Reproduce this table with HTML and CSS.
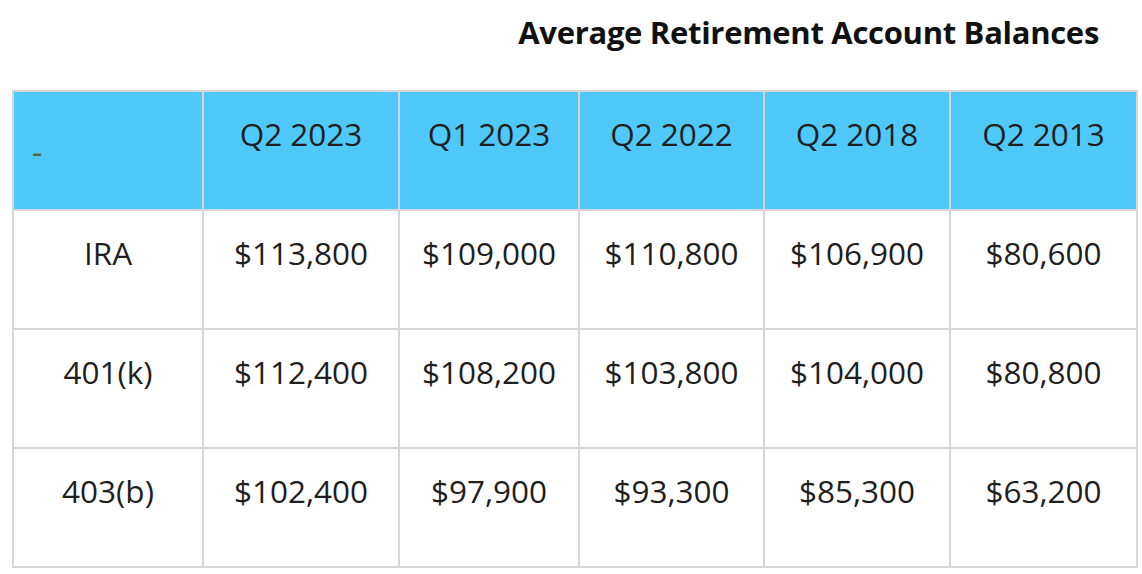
FILE: index.html
```html
<!DOCTYPE html>
<html>
<head>
<meta charset="utf-8">
<link rel="stylesheet" href="styles.css">
</head>
<body>
<div class="page">
  <h2 class="title">Average Retirement Account Balances</h2>
  <table class="balances">
    <colgroup>
      <col class="c0"><col class="c1"><col class="c2"><col class="c3"><col class="c4"><col class="c5">
    </colgroup>
    <thead>
      <tr>
        <th class="corner"><span class="dash">-</span></th>
        <th>Q2 2023</th>
        <th>Q1 2023</th>
        <th>Q2 2022</th>
        <th>Q2 2018</th>
        <th>Q2 2013</th>
      </tr>
    </thead>
    <tbody>
      <tr>
        <td>IRA</td><td>$113,800</td><td>$109,000</td><td>$110,800</td><td>$106,900</td><td>$80,600</td>
      </tr>
      <tr>
        <td>401(k)</td><td>$112,400</td><td>$108,200</td><td>$103,800</td><td>$104,000</td><td>$80,800</td>
      </tr>
      <tr>
        <td>403(b)</td><td>$102,400</td><td>$97,900</td><td>$93,300</td><td>$85,300</td><td>$63,200</td>
      </tr>
    </tbody>
  </table>
</div>
</body>
</html>
```

FILE: styles.css
```css
html, body {
  margin: 0;
  padding: 0;
  background: #ffffff;
}
.page {
  padding: 12px 0 0 12px;
  font-family: "Open Sans", "Noto Sans", sans-serif;
  color: #1f1f1f;
}
.title {
  margin: 0 0 38px 0;
  width: 1087px;
  text-align: right;
  font-size: 31px;
  line-height: 40px;
  font-weight: 700;
  color: #111111;
  letter-spacing: -0.3px;
}
.balances {
  border-collapse: collapse;
  table-layout: fixed;
  width: 1124px;
}
.c0 { width: 190px; }
.c1 { width: 196px; }
.c2 { width: 180px; }
.c3 { width: 185px; }
.c4 { width: 186px; }
.c5 { width: 187px; }
.balances th,
.balances td {
  border: 2px solid #d6d6d6;
  height: 119px;
  box-sizing: border-box;
  padding: 20px 0 0 0;
  vertical-align: top;
  text-align: center;
  font-size: 31.5px;
  line-height: 44px;
  font-weight: 400;
  color: #1f1f1f;
}
.balances thead th {
  background: #4fc9fa;
}
.balances th.corner {
  text-align: left;
  vertical-align: top;
  padding: 38px 0 0 18px;
}
.dash {
  font-size: 32px;
  line-height: 40px;
  color: #4f6a2f;
}
```
